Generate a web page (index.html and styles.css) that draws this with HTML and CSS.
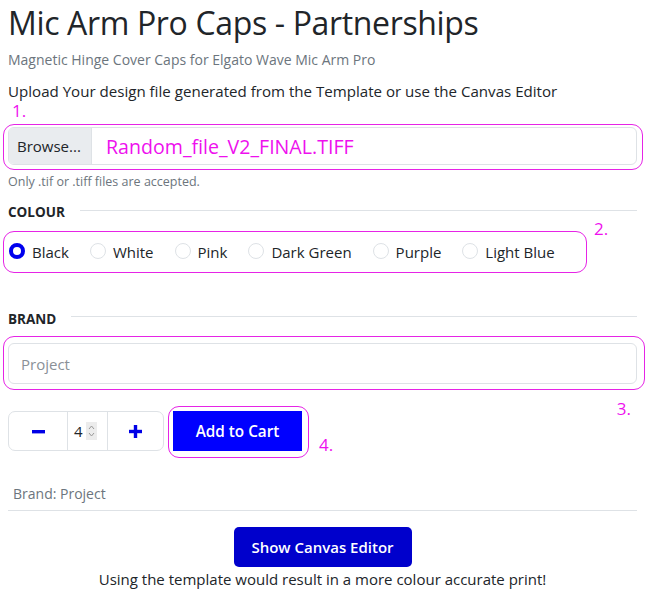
FILE: index.html
```html
<!DOCTYPE html>
<html lang="en">
<head>
<meta charset="utf-8">
<title>Mic Arm Pro Caps - Partnerships</title>
<link rel="stylesheet" href="styles.css">
</head>
<body>
<div class="page">
  <h1 class="title">Mic Arm Pro Caps - Partnerships</h1>
  <p class="subtitle">Magnetic Hinge Cover Caps for Elgato Wave Mic Arm Pro</p>
  <p class="lead">Upload Your design file generated from the Template or use the Canvas Editor</p>
  <div class="mark mark-1">1.</div>
  <div class="hl hl-file">
    <div class="file-input">
      <span class="browse">Browse...</span>
      <span class="filename">Random_file_V2_FINAL.TIFF</span>
    </div>
  </div>
  <p class="help">Only .tif or .tiff files are accepted.</p>

  <div class="section-head colour-head"><span>COLOUR</span><i class="rule"></i></div>
  <div class="radio-row">
    <div class="hl hl-radio">
      <label class="radio"><span class="dot checked"></span>Black</label>
      <label class="radio"><span class="dot"></span>White</label>
      <label class="radio"><span class="dot"></span>Pink</label>
      <label class="radio"><span class="dot"></span>Dark Green</label>
      <label class="radio"><span class="dot"></span>Purple</label>
      <label class="radio"><span class="dot"></span>Light Blue</label>
    </div>
    <div class="mark mark-2">2.</div>
  </div>

  <div class="section-head brand-head"><span>BRAND</span><i class="rule"></i></div>
  <div class="hl hl-brand">
    <div class="text-input">Project</div>
  </div>
  <div class="mark mark-3">3.</div>

  <div class="cart-row">
    <div class="qty">
      <span class="qty-btn"><svg width="13" height="13" viewBox="0 0 13 13"><rect x="0" y="5" width="13" height="3.4" fill="#0000e6"/></svg></span>
      <span class="qty-val">4<span class="spin"><svg width="11" height="20" viewBox="0 0 11 20"><path d="M3 8 L5.5 5 L8 8" fill="none" stroke="#999" stroke-width="1"/><path d="M3 12 L5.5 15 L8 12" fill="none" stroke="#999" stroke-width="1"/></svg></span></span>
      <span class="qty-btn"><svg width="13" height="13" viewBox="0 0 13 13"><rect x="0" y="4.8" width="13" height="3.4" fill="#0000e6"/><rect x="4.8" y="0" width="3.4" height="13" fill="#0000e6"/></svg></span>
    </div>
    <div class="hl hl-cart"><button class="cart-btn">Add to Cart</button></div>
    <div class="mark mark-4">4.</div>
  </div>

  <div class="summary">Brand: Project</div>

  <div class="canvas">
    <button class="canvas-btn">Show Canvas Editor</button>
    <p class="note">Using the template would result in a more colour accurate print!</p>
  </div>
</div>
</body>
</html>
```

FILE: styles.css
```css
* { box-sizing: border-box; }
html, body { margin: 0; padding: 0; background: #fff; }
body {
  font-family: "Open Sans", "Noto Sans", "DejaVu Sans", sans-serif;
  color: #212529;
  font-size: 15px;
}
.page { padding: 0 10px 0 8px; width: 647px; }

.title {
  font-size: 32px;
  font-weight: 500;
  margin: 0;
  padding-top: 2px;
  line-height: 42px;
  letter-spacing: -0.35px;
}
.subtitle {
  margin: 6px 0 0 0;
  color: #6c757d;
  font-size: 14px;
  line-height: 20px;
}
.lead {
  margin: 11px 0 0 0;
  font-size: 15.1px;
  line-height: 21px;
}
.mark {
  color: #ee10ee;
  font-size: 17px;
  line-height: 20px;
}
.mark-1 { padding-left: 4px; line-height: 18px; }

.hl {
  border: 1.5px solid #e624e6;
  border-radius: 11px;
}
.hl-file {
  margin: 4px -6px 0 -5px;
  padding: 2px 5px 3px 4px;
  height: 46px;
}
.file-input {
  display: flex;
  align-items: center;
  height: 38px;
  border: 1px solid #dee2e6;
  border-radius: 6px;
  overflow: hidden;
}
.browse {
  background: #e9ecef;
  border-right: 1px solid #dee2e6;
  height: 100%;
  display: flex;
  align-items: center;
  padding: 0 12px 0 8px;
  font-size: 15px;
  width: 83px;
}
.filename {
  color: #ee10ee;
  font-size: 19.6px;
  padding-left: 14px;
}
.help {
  margin: 3px 0 0 0;
  color: #6c757d;
  font-size: 12.5px;
  line-height: 18px;
}

.section-head {
  display: flex;
  align-items: center;
  gap: 15px;
  font-weight: 700;
  font-size: 13.5px;
}
.section-head .rule {
  flex: 1;
  height: 1px;
  background: #dee2e6;
  margin-top: -3px;
}
.colour-head { margin-top: 12px; height: 18px; }
.brand-head { margin-top: 37px; height: 18px; }
.brand-head .rule { margin-top: -5px; }

.radio-row {
  display: flex;
  align-items: flex-start;
  margin-top: 2px;
}
.hl-radio {
  margin-left: -5px;
  margin-top: 8px;
  width: 584px;
  height: 42px;
  display: flex;
  align-items: center;
  padding: 0 0 0 5px;
}
.radio {
  display: flex;
  align-items: center;
  gap: 7px;
  margin-right: 21px;
  font-size: 15px;
}
.dot {
  width: 16px;
  height: 16px;
  border-radius: 50%;
  border: 1px solid #dee2e6;
  background: #fff;
  margin-top: -3px;
}
.dot.checked { border: 4.5px solid #0000ee; }
.mark-2 { margin-left: 7px; margin-top: -4px; }

.hl-brand {
  margin: 8px -8px 0 -5px;
  padding: 6px 7px 4px 4px;
  height: 54px;
}
.text-input {
  height: 41px;
  border: 1px solid #dee2e6;
  border-radius: 6px;
  display: flex;
  align-items: center;
  padding-left: 12px;
  color: #8a9097;
  font-size: 15px;
}
.mark-3 { text-align: right; padding-right: 6px; margin-top: 9px; height: 17px; }

.cart-row {
  display: flex;
  align-items: flex-start;
  margin-top: -10px;
}
.qty {
  display: flex;
  width: 156px;
  height: 40px;
  margin-top: 5px;
  border: 1px solid #dee2e6;
  border-radius: 7px;
  overflow: hidden;
}
.qty-btn {
  width: 58px;
  display: flex;
  align-items: center;
  justify-content: center;
}
.qty-btn:last-child { flex: 1; }
.qty-val {
  width: 41px;
  border-left: 1px solid #dee2e6;
  border-right: 1px solid #dee2e6;
  display: flex;
  align-items: center;
  padding-left: 6px;
  gap: 3px;
  font-size: 15px;
}
.spin {
  display: flex;
  background: #ececec;
  height: 18px;
  overflow: hidden;
  align-items: center;
}
.hl-cart {
  margin-left: 4px;
  padding: 4px 5px 4px 4px;
  width: 141px;
  height: 52px;
}
.cart-btn {
  display: block;
  width: 129px;
  height: 40px;
  border: 0;
  background: #0000ff;
  color: #fff;
  font-family: inherit;
  font-size: 15.3px;
  font-weight: 600;
  border-radius: 0;
  padding: 0;
}
.mark-4 { margin-left: 10px; margin-top: 29px; }

.summary {
  margin-top: 25px;
  padding: 0 0 6px 5px;
  border-bottom: 1px solid #dee2e6;
  color: #6c757d;
  font-size: 14px;
  line-height: 21px;
}

.canvas {
  display: flex;
  flex-direction: column;
  align-items: center;
  padding-top: 16px;
}
.canvas-btn {
  width: 178px;
  height: 40px;
  background: #0000cc;
  color: #fff;
  border: 0;
  border-radius: 5px;
  font-family: inherit;
  font-size: 15px;
  font-weight: 600;
}
.note {
  margin: 2px 0 0 0;
  font-size: 15px;
  line-height: 21px;
}
```
